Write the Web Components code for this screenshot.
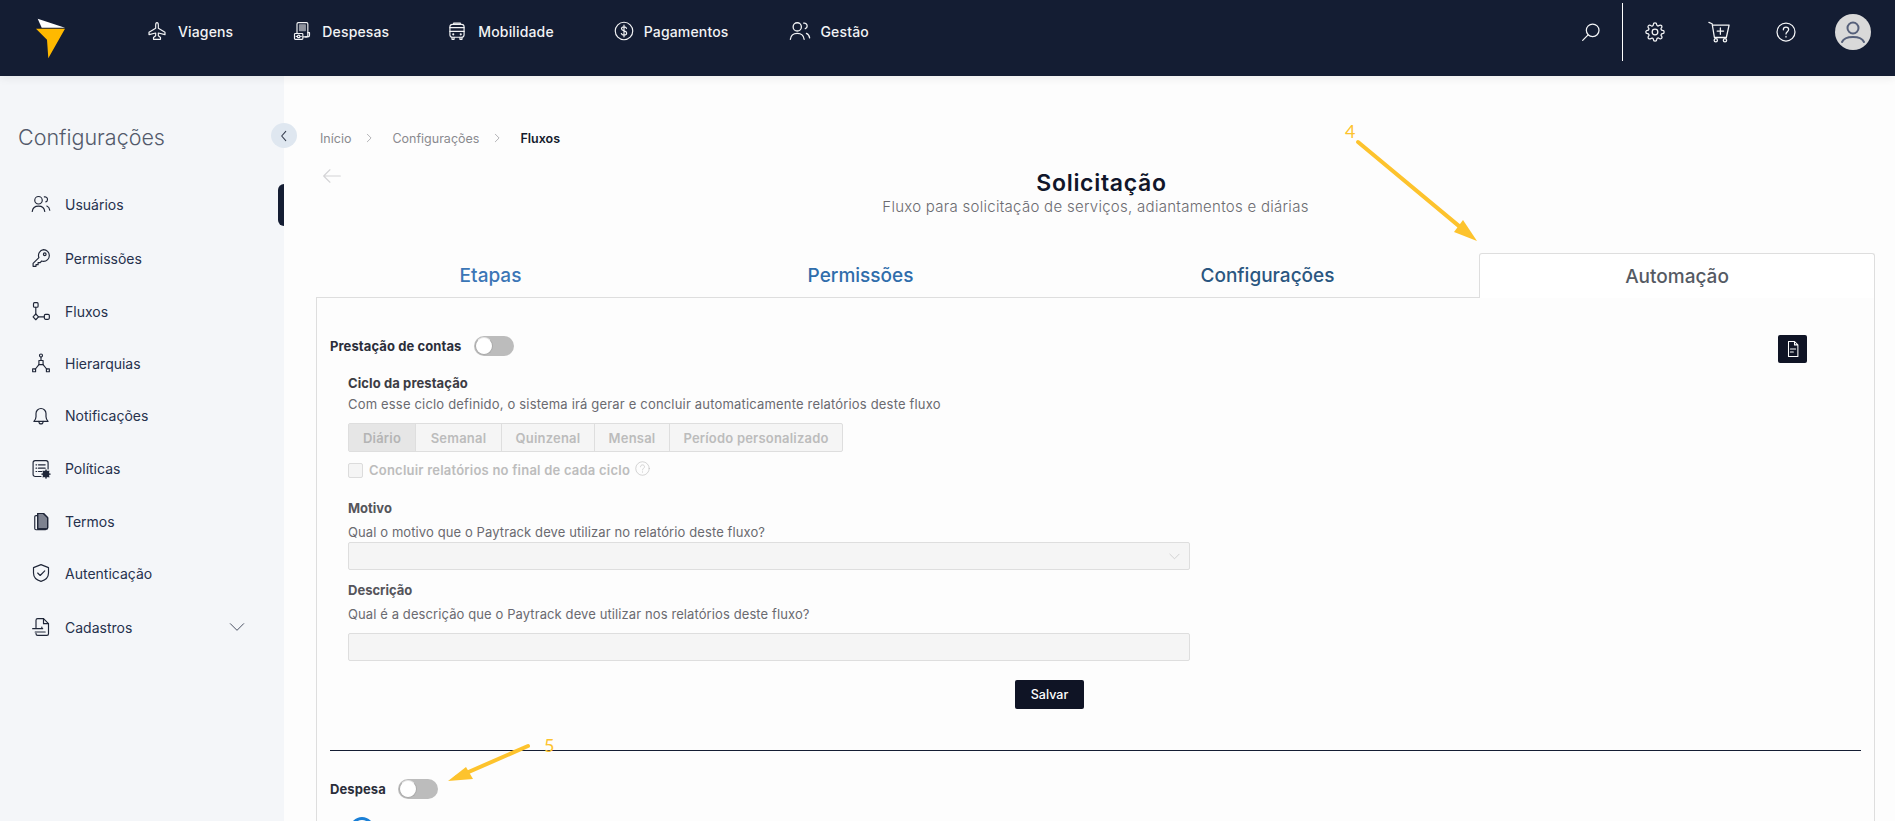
<!DOCTYPE html>
<html lang="pt-BR">
<head>
<meta charset="utf-8">
<title>Solicitação</title>
<style>
  html, body { margin: 0; height: 821px; overflow: hidden; background: #fdfdfd; }
  body { font-family: Inter, "Liberation Sans", sans-serif; position: relative; }
  .shell { display: flex; height: 745px; overflow: hidden; }
</style>
</head>
<body>
<app-header></app-header>
<div class="shell">
  <side-bar></side-bar>
  <flow-page></flow-page>
</div>
<note-arrow label="4" x1="1358" y1="142" x2="1477" y2="241" barbs="1463,220 1454,232" lx="1345" ly="138"></note-arrow>
<note-arrow label="5" x1="528" y1="746" x2="448" y2="781" barbs="473,779 466,767" lx="544" ly="752"></note-arrow>

<script>
const ICONS = {
  plane: '<path d="M12 2c1 0 1.6 1.4 1.6 3v3.6l8 5v2.800l-8-2v3.400l2.600 2v2.200H7.800v-2.200l2.600-2v-3.400l-8 2v-2.800l8-5V5C10.400 3.400 11 2 12 2z"/>',
  wallet: '<rect x="6" y="2" width="13" height="17" rx="1.500"/><rect x="9" y="4.500" width="7" height="7" fill="currentColor" opacity=".55"/><path d="M19 14h2v3a2 2 0 0 1-2 2h-3"/><rect x="3" y="15" width="10" height="7" rx="1" fill="#141d33"/><circle cx="8" cy="18.500" r="1.500"/><path d="M5 18.500h.5M10.500 18.500h.5"/>',
  bus: '<rect x="3.500" y="4" width="17" height="15.500" rx="3"/><path d="M8 4V2.500h8V4M3.500 12.500h17M3.500 8h17M6 19.500V22h2.500v-2.500M15.500 19.500V22H18v-2.500"/><circle cx="7.500" cy="16" r=".6"/><circle cx="16.500" cy="16" r=".6"/>',
  dollar: '<circle cx="12" cy="12" r="10.500"/><path d="M15 8.800c-.5-1.300-1.600-1.800-3-1.800-1.700 0-3 .9-3 2.400 0 3.300 6.200 1.700 6.200 5 0 1.600-1.400 2.600-3.200 2.600-1.500 0-2.700-.7-3.200-2M12 5v14"/>',
  users: '<circle cx="9" cy="7.500" r="4.500"/><path d="M1.500 21c.5-4.500 3.500-6.500 7.500-6.500s7 2 7.500 6.500M16 3.500c2-.5 3.800 1 3.800 3 0 1.400-.8 2.600-2 3M19 14.500c2 .8 3.200 2.600 3.500 5"/>',
  key: '<path d="M15 2a7 7 0 0 1 0 14c-.8 0-1.500-.1-2.200-.4L11 17.500H8.500V20H6v2H2.500v-3.500l7-7a7 7 0 0 1 5.500-9.500z"/><circle cx="16.500" cy="7.500" r="1.600"/>',
  flow: '<rect x="3" y="2" width="5.500" height="5.500" rx="1.200"/><path d="M5.750 7.500v9M9 19h7"/><path d="M5.750 15.500l3.250 3.500-3.250 3.500L2.500 19z"/><rect x="16" y="16" width="6" height="6" rx="1.500"/>',
  tree: '<circle cx="12" cy="3" r="1.800"/><path d="M12 5v4"/><rect x="9.500" y="9" width="5" height="5"/><path d="M9.500 14L5 19.500M14.500 14l4.500 5.500"/><rect x="2" y="19" width="3.500" height="3.500"/><rect x="18.500" y="19" width="3.500" height="3.500"/>',
  bell: '<path d="M3.500 18.500c1.500-1.500 2.500-3 2.500-5.500V9a6 6 0 0 1 12 0v4c0 2.500 1 4 2.500 5.500z"/><path d="M9.500 18.500c0 2 1 3 2.500 3s2.500-1 2.500-3"/>',
  policy: '<path d="M12 21H5a2.500 2.500 0 0 1-2.500-2.500v-14A2.500 2.500 0 0 1 5 2h13a2.500 2.500 0 0 1 2.500 2.500V12"/><path d="M6 7h.8M9 7h8M6 11h.8M9 11h8M6 15h.8M9 15h4"/><circle cx="18" cy="18" r="3.400" fill="currentColor"/><path d="M18 13v10M13 18h10M14.500 14.500l7 7M21.500 14.500l-7 7" stroke-width="1.500"/>',
  docs: '<path d="M8 3h7l5 5v12a1.500 1.500 0 0 1-1.500 1.500H8z" fill="#7d8290"/><path d="M7 5.500H6A1.500 1.500 0 0 0 4.500 7v14A1.500 1.500 0 0 0 6 22.500h11a1.500 1.500 0 0 0 1.500-1M8 3h7l5 5v12a1.500 1.500 0 0 1-1.500 1.500H9.500A1.500 1.500 0 0 1 8 20z"/>',
  shield: '<path d="M12 2l9 3.500v6.500c0 5-3.600 8.500-9 10-5.400-1.500-9-5-9-10V5.500z"/><path d="M8 12l3 3 5.500-5.500"/>',
  sheet: '<path d="M6 13V4a2 2 0 0 1 2-2h7l6 6v12a2 2 0 0 1-2 2H8a2 2 0 0 1-2-2v-.5"/><path d="M15 2v6h6M2 14h12M5 18h12M13 14v-2"/>',
  search: '<circle cx="14" cy="10" r="7.600"/><path d="M8.500 15.500L2 22"/>',
  gear: '<circle cx="12" cy="12" r="3.400"/><path d="M19.400 15a1.650 1.650 0 0 0 .33 1.820l.06.06a2 2 0 0 1 0 2.830 2 2 0 0 1-2.830 0l-.06-.06a1.650 1.650 0 0 0-1.820-.33 1.650 1.650 0 0 0-1 1.510V21a2 2 0 0 1-2 2 2 2 0 0 1-2-2v-.09A1.650 1.650 0 0 0 9 19.400a1.650 1.650 0 0 0-1.820.33l-.06.06a2 2 0 0 1-2.830 0 2 2 0 0 1 0-2.830l.06-.06a1.650 1.650 0 0 0 .33-1.820 1.650 1.650 0 0 0-1.510-1H3a2 2 0 0 1-2-2 2 2 0 0 1 2-2h.09A1.650 1.650 0 0 0 4.600 9a1.650 1.650 0 0 0-.33-1.820l-.06-.06a2 2 0 0 1 0-2.830 2 2 0 0 1 2.830 0l.06.06a1.650 1.650 0 0 0 1.820.33H9a1.650 1.650 0 0 0 1-1.510V3a2 2 0 0 1 2-2 2 2 0 0 1 2 2v.09a1.650 1.650 0 0 0 1 1.510 1.650 1.650 0 0 0 1.820-.33l.06-.06a2 2 0 0 1 2.830 0 2 2 0 0 1 0 2.830l-.06.06a1.650 1.650 0 0 0-.33 1.820V9a1.650 1.650 0 0 0 1.510 1H21a2 2 0 0 1 2 2 2 2 0 0 1-2 2h-.09a1.650 1.650 0 0 0-1.510 1z"/>',
  cart: '<path d="M1 1.500l3.500 1.500 2.500 15h13L23 4.500H5"/><circle cx="8.500" cy="21" r="1.800"/><circle cx="18.500" cy="21" r="1.800"/><path d="M13.500 7.500v7M10 11h7"/>',
  help: '<circle cx="12" cy="12" r="10.800"/><path d="M8.800 9.300c0-1.900 1.400-3.100 3.200-3.100s3.200 1.200 3.200 2.900c0 2.500-3.200 2.600-3.200 5.200M12 17.200v.8"/>',
  file: '<path d="M6 2h8l4.500 4.500V22H6zM14 2v4.500h4.500M8.500 12h7M8.500 16h4"/>',
  back: '<path d="M22 12H2M9.500 4.500L2 12l7.500 7.500"/>',
  left: '<path d="M15 4l-7 8 7 8"/>',
  right: '<path d="M8 3l9 9-9 9"/>',
  down: '<path d="M2 7l10 10L22 7"/>',
};

class UiIcon extends HTMLElement {
  connectedCallback() {
    const size = this.getAttribute('size') || 18;
    const stroke = this.getAttribute('stroke') || 1.6;
    this.attachShadow({ mode: 'open' }).innerHTML = `
      <style>
        :host { display: inline-flex; flex: none; width: ${size}px; height: ${size}px; }
        svg { width: 100%; height: 100%; display: block; fill: none; stroke: currentColor; stroke-width: ${stroke}; stroke-linecap: round; stroke-linejoin: round; }
      </style>
      <svg viewBox="0 0 24 24">${ICONS[this.getAttribute('name')] || ''}</svg>`;
  }
}
customElements.define('ui-icon', UiIcon);

class AppHeader extends HTMLElement {
  connectedCallback() {
    const nav = [
      ['plane', 'Viagens', 20, 11, 0], ['wallet', 'Despesas', 20, 10, 0], ['bus', 'Mobilidade', 20, 11, -1],
      ['dollar', 'Pagamentos', 20, 10, 1], ['users', 'Gestão', 22, 9, 2],
    ];
    this.attachShadow({ mode: 'open' }).innerHTML = `
      <style>
        :host { display: flex; align-items: center; height: 76px; box-sizing: border-box; padding: 0 24px 12px 36px; background: #141d33; color: #fff; position: relative; z-index: 2; box-shadow: 0 3px 8px rgba(0,0,0,.06); }
        .logo { width: 30px; height: 41px; margin-top: 12px; flex: none; }
        nav { display: flex; margin: -2px 0 0 81px; gap: 59px; }
        nav a { display: flex; align-items: center; font-size: 14px; font-weight: 500; letter-spacing: .15px; color: #f2f3f5; white-space: nowrap; }
        .tools { display: flex; align-items: center; margin-left: auto; color: #f4f5f7; }
        .sep { width: 1px; height: 58px; background: #fff; margin: 0 22px 0 21px; }
        .avatar { width: 36px; height: 36px; border-radius: 50%; background: #d9d9d9; color: #56607a; margin-left: 39px; display: flex; align-items: center; justify-content: center; }
      </style>
      <svg class="logo" viewBox="36 12.500 30 41">
        <polygon points="37.700,13.300 65,22.300 41.700,22.300" fill="#fff"/>
        <polygon points="36,23.300 65,23.300 48.300,52.700 47,34.300" fill="#ffb900"/>
      </svg>
      <nav>${nav.map(([icon, text, size, gap, nudge]) => `<a style="margin-left:${nudge}px"><ui-icon name="${icon}" size="${size}" stroke="1.400" style="margin-right:${gap}px"></ui-icon>${text}</a>`).join('')}</nav>
      <div class="tools">
        <ui-icon name="search" size="20" stroke="1.500"></ui-icon>
        <div class="sep"></div>
        <ui-icon name="gear" size="20" stroke="1.500"></ui-icon>
        <ui-icon name="cart" size="22" stroke="1.400" style="margin-left:43px"></ui-icon>
        <ui-icon name="help" size="20" stroke="1.500" style="margin-left:46px"></ui-icon>
        <div class="avatar"><svg width="26" height="26" viewBox="0 0 26 26" fill="none" stroke="currentColor" stroke-width="2"><circle cx="13" cy="9" r="5.500"/><path d="M2 23c1.500-3.500 6-5 11-5s9.500 1.500 11 5" stroke-linecap="round"/></svg></div>
      </div>`;
  }
}
customElements.define('app-header', AppHeader);

class SideItem extends HTMLElement {
  connectedCallback() {
    const caret = this.hasAttribute('caret') ? '<ui-icon class="caret" name="down" size="16" stroke="1.500"></ui-icon>' : '';
    this.attachShadow({ mode: 'open' }).innerHTML = `
      <style>
        :host { display: flex; align-items: center; height: ${this.getAttribute('h') || 52}px; gap: 14px; margin-left: -1px; font-size: 14px; color: #26314d; }
        ui-icon { color: #1f2638; }
        .caret { margin-left: auto; margin-right: 39px; color: #4a5163; }
      </style>
      <ui-icon name="${this.getAttribute('icon')}" size="20" stroke="1.400"></ui-icon>
      <slot></slot>${caret}`;
  }
}
customElements.define('side-item', SideItem);

class SideBar extends HTMLElement {
  connectedCallback() {
    this.attachShadow({ mode: 'open' }).innerHTML = `
      <style>
        :host { display: block; flex: none; width: 284px; box-sizing: border-box; padding: 47px 0 0 32px; background: #f4f6f9; position: relative; z-index: 1; }
        h2 { margin: 0 0 26px -14px; font-size: 21.500px; line-height: 28px; font-weight: 300; color: #535a6b; white-space: nowrap; }
        .mark { position: absolute; right: 0; top: 108px; width: 6px; height: 42px; background: #141d33; border-radius: 6px 0 0 6px; }
        .pill { position: absolute; left: 271px; top: 47px; width: 26px; height: 25px; border-radius: 50%; background: #dfe7f0; color: #333a4c; display: flex; align-items: center; justify-content: center; }
      </style>
      <h2>Configurações</h2>
      <div class="mark"></div>
      <div class="pill"><ui-icon name="left" size="14" stroke="1.800"></ui-icon></div>
      <side-item icon="users" h="54">Usuários</side-item>
      <side-item icon="key" h="54">Permissões</side-item>
      <side-item icon="flow" h="52">Fluxos</side-item>
      <side-item icon="tree" h="52">Hierarquias</side-item>
      <side-item icon="bell" h="53">Notificações</side-item>
      <side-item icon="policy" h="53">Políticas</side-item>
      <side-item icon="docs" h="52">Termos</side-item>
      <side-item icon="shield" h="52">Autenticação</side-item>
      <side-item icon="sheet" h="56" caret>Cadastros</side-item>`;
  }
}
customElements.define('side-bar', SideBar);

class BreadCrumbs extends HTMLElement {
  connectedCallback() {
    this.attachShadow({ mode: 'open' }).innerHTML = `
      <style>
        :host { display: flex; align-items: center; height: 20px; padding-left: 4px; font-size: 12.500px; color: #8a8a8f; }
        ui-icon { margin: 0 18px 0 13px; color: #a5a5a8; }
        b { color: #141a2c; font-weight: 600; }
      </style>
      <span>Início</span><ui-icon name="right" size="10" stroke="2"></ui-icon>
      <span>Configurações</span><ui-icon name="right" size="10" stroke="2"></ui-icon>
      <b>Fluxos</b>`;
  }
}
customElements.define('bread-crumbs', BreadCrumbs);

class PageHead extends HTMLElement {
  connectedCallback() {
    this.attachShadow({ mode: 'open' }).innerHTML = `
      <style>
        :host { display: grid; height: 105px; }
        :host > * { grid-area: 1 / 1; }
        .back { justify-self: start; margin: 18px 0 0 6px; color: #d4d4d6; }
        .text { padding-top: 22px; text-align: center; }
        h1 { margin: 0 0 0 12px; font-size: 23px; line-height: 26px; font-weight: 600; letter-spacing: .7px; color: #11162a; }
        p { margin: 1px 0 0; font-size: 15px; line-height: 20px; letter-spacing: .28px; color: #6b6b70; font-weight: 300; }
      </style>
      <ui-icon class="back" name="back" size="20" stroke="1.400"></ui-icon>
      <div class="text"><h1>Solicitação</h1><p>Fluxo para solicitação de serviços, adiantamentos e diárias</p></div>`;
  }
}
customElements.define('page-head', PageHead);

class TabBar extends HTMLElement {
  connectedCallback() {
    this.attachShadow({ mode: 'open' }).innerHTML = `
      <style>
        :host { display: grid; grid-template-columns: 349px 391px 423px 396px; height: 45px; font-size: 19px; font-weight: 500; }
        div { display: flex; align-items: center; justify-content: center; box-sizing: border-box; padding-top: 1px; border-bottom: 1px solid #dedede; }
        .active { border: 1px solid #dedede; border-bottom: 0; border-radius: 3px 3px 0 0; color: #555a63; background: #fff; }
      </style>
      <div style="color:#3b76b6">Etapas</div>
      <div style="color:#2f6dab">Permissões</div>
      <div style="color:#2a5680">Configurações</div>
      <div class="active">Automação</div>`;
  }
}
customElements.define('tab-bar', TabBar);

class ToggleRow extends HTMLElement {
  connectedCallback() {
    this.attachShadow({ mode: 'open' }).innerHTML = `
      <style>
        :host { display: flex; align-items: center; gap: var(--toggle-gap, 13px); font-size: 13px; font-weight: 700; letter-spacing: .1px; color: #2b2e3a; height: 20px; }
        i { position: relative; display: block; width: 40px; height: 20px; border-radius: 10px; background: #bcbcbc; }
        i::after { content: ""; position: absolute; left: 1px; top: 1px; width: 16px; height: 16px; border-radius: 50%; background: #fff; border: 1px solid #a8a8a8; border-top-color: #e4e4e4; }
      </style>
      <slot></slot><i></i>`;
  }
}
customElements.define('toggle-row', ToggleRow);

class SegControl extends HTMLElement {
  connectedCallback() {
    const widths = { 'Diário': 67, 'Semanal': 86, 'Quinzenal': 93, 'Mensal': 75, 'Período personalizado': 173 };
    this.attachShadow({ mode: 'open' }).innerHTML = `
      <style>
        :host { display: flex; height: 29px; width: 495px; box-sizing: border-box; border: 1px solid #dedede; border-radius: 2px; background: #f5f5f5; font-size: 13px; font-weight: 600; letter-spacing: .2px; color: #bcbcbc; }
        span { display: flex; align-items: center; justify-content: center; box-sizing: border-box; border-right: 1px solid #dedede; flex: none; white-space: nowrap; }
        span:last-child { border-right: 0; flex: 1; }
        .on { background: #e6e6e6; color: #b4b4b4; }
      </style>
      ${Object.entries(widths).map(([text, w], i) => `<span class="${i ? '' : 'on'}" style="width:${w}px">${text}</span>`).join('')}`;
  }
}
customElements.define('seg-control', SegControl);

class FieldBox extends HTMLElement {
  connectedCallback() {
    const arrow = this.hasAttribute('select') ? '<ui-icon name="down" size="11" stroke="1.300"></ui-icon>' : '';
    this.attachShadow({ mode: 'open' }).innerHTML = `
      <style>
        :host { display: flex; align-items: center; justify-content: flex-end; box-sizing: border-box; height: 28px; border: 1px solid #dedede; border-radius: 2px; background: #f5f5f5; padding-right: 9px; color: #bcbcbc; }
      </style>
      ${arrow}`;
  }
}
customElements.define('field-box', FieldBox);

class AutomationPanel extends HTMLElement {
  connectedCallback() {
    this.attachShadow({ mode: 'open' }).innerHTML = `
      <style>
        :host { display: block; box-sizing: border-box; height: 523px; overflow: hidden; border: 1px solid #dedede; border-width: 0 1px; padding: 37px 13px 0 13px; font-size: 13px; color: #5a5a60; }
        .top { display: flex; align-items: flex-start; height: 28px; margin-bottom: 10px; }
        .top toggle-row { margin-top: 1px; }
        .file { margin: 0 54px 0 auto; width: 29px; height: 28px; border-radius: 2px; background: #0f1425; color: #fff; display: flex; align-items: center; justify-content: center; }
        .form { margin-left: 18px; width: 842px; }
        .title { font-weight: 700; line-height: 20px; color: #55555b; }
        .title.dark { color: #3c3c44; letter-spacing: .1px; }
        .hint { line-height: 20px; letter-spacing: .18px; color: #6a6a70; white-space: nowrap; }
        .hint.tight { letter-spacing: .1px; }
        seg-control { margin-top: 9px; }
        .check { display: flex; align-items: center; height: 20px; margin-top: 8px; font-weight: 600; letter-spacing: .22px; color: #bcbcbc; }
        .check i { width: 13px; height: 13px; border: 1px solid #dcdcdc; border-radius: 2px; background: #f5f5f5; margin-right: 6px; }
        .check ui-icon { margin-left: 5px; margin-top: -3px; }
        .save { display: flex; align-items: center; justify-content: center; margin: 19px 0 0 667px; width: 69px; height: 29px; border-radius: 2px; background: #0f1425; color: #fff; font-size: 12.500px; font-weight: 500; }
        hr { margin: 41px 0 0; height: 1px; border: 0; width: 1531px; background: #141d33; }
        .ring { margin: 18px 0 0 20px; width: 24px; height: 24px; box-sizing: border-box; border: 3px solid #1a7fd6; border-radius: 50%; }
      </style>
      <div class="top">
        <toggle-row>Prestação de contas</toggle-row>
        <div class="file"><ui-icon name="file" size="18" stroke="1.400"></ui-icon></div>
      </div>
      <div class="form">
        <div class="title dark">Ciclo da prestação</div>
        <div class="hint" style="margin-top:1px">Com esse ciclo definido, o sistema irá gerar e concluir automaticamente relatórios deste fluxo</div>
        <seg-control></seg-control>
        <div class="check"><i></i>Concluir relatórios no final de cada ciclo<ui-icon name="help" size="15" stroke="1"></ui-icon></div>
        <div class="title" style="margin-top:18px">Motivo</div>
        <div class="hint tight" style="margin-top:5px;line-height:19px">Qual o motivo que o Paytrack deve utilizar no relatório deste fluxo?</div>
        <field-box select></field-box>
        <div class="title" style="margin-top:10px">Descrição</div>
        <div class="hint tight" style="margin-top:4px">Qual é a descrição que o Paytrack deve utilizar nos relatórios deste fluxo?</div>
        <field-box style="margin-top:9px"></field-box>
        <div class="save">Salvar</div>
      </div>
      <hr>
      <toggle-row style="margin-top:28px;--toggle-gap:12px">Despesa</toggle-row>
      <div class="ring"></div>`;
  }
}
customElements.define('automation-panel', AutomationPanel);

class FlowPage extends HTMLElement {
  connectedCallback() {
    this.attachShadow({ mode: 'open' }).innerHTML = `
      <style>
        :host { display: block; flex: 1; min-width: 0; box-sizing: border-box; padding: 52px 20px 0 32px; background: #fdfdfd; }
      </style>
      <bread-crumbs></bread-crumbs>
      <page-head></page-head>
      <tab-bar></tab-bar>
      <automation-panel></automation-panel>`;
  }
}
customElements.define('flow-page', FlowPage);

// arrows drawn over the screenshot, the coordinates are the content here
class NoteArrow extends HTMLElement {
  connectedCallback() {
    const a = name => this.getAttribute(name);
    this.attachShadow({ mode: 'open' }).innerHTML = `
      <style>
        :host { position: absolute; inset: 0; display: block; pointer-events: none; z-index: 5; }
        svg { width: 1895px; height: 821px; display: block; }
        text { font: 400 18px Lato, "Liberation Sans", sans-serif; fill: #fdc32d; }
      </style>
      <svg viewBox="0 0 1895 821">
        <line x1="${a('x1')}" y1="${a('y1')}" x2="${(+a('x1') * .1 + +a('x2') * .9)}" y2="${(+a('y1') * .1 + +a('y2') * .9)}" stroke="#fdc32d" stroke-width="4" stroke-linecap="round"/>
        <polygon points="${a('x2')},${a('y2')} ${a('barbs')}" fill="#fdc32d"/>
        <text x="${a('lx')}" y="${a('ly')}">${a('label')}</text>
      </svg>`;
  }
}
customElements.define('note-arrow', NoteArrow);
</script>
</body>
</html>
